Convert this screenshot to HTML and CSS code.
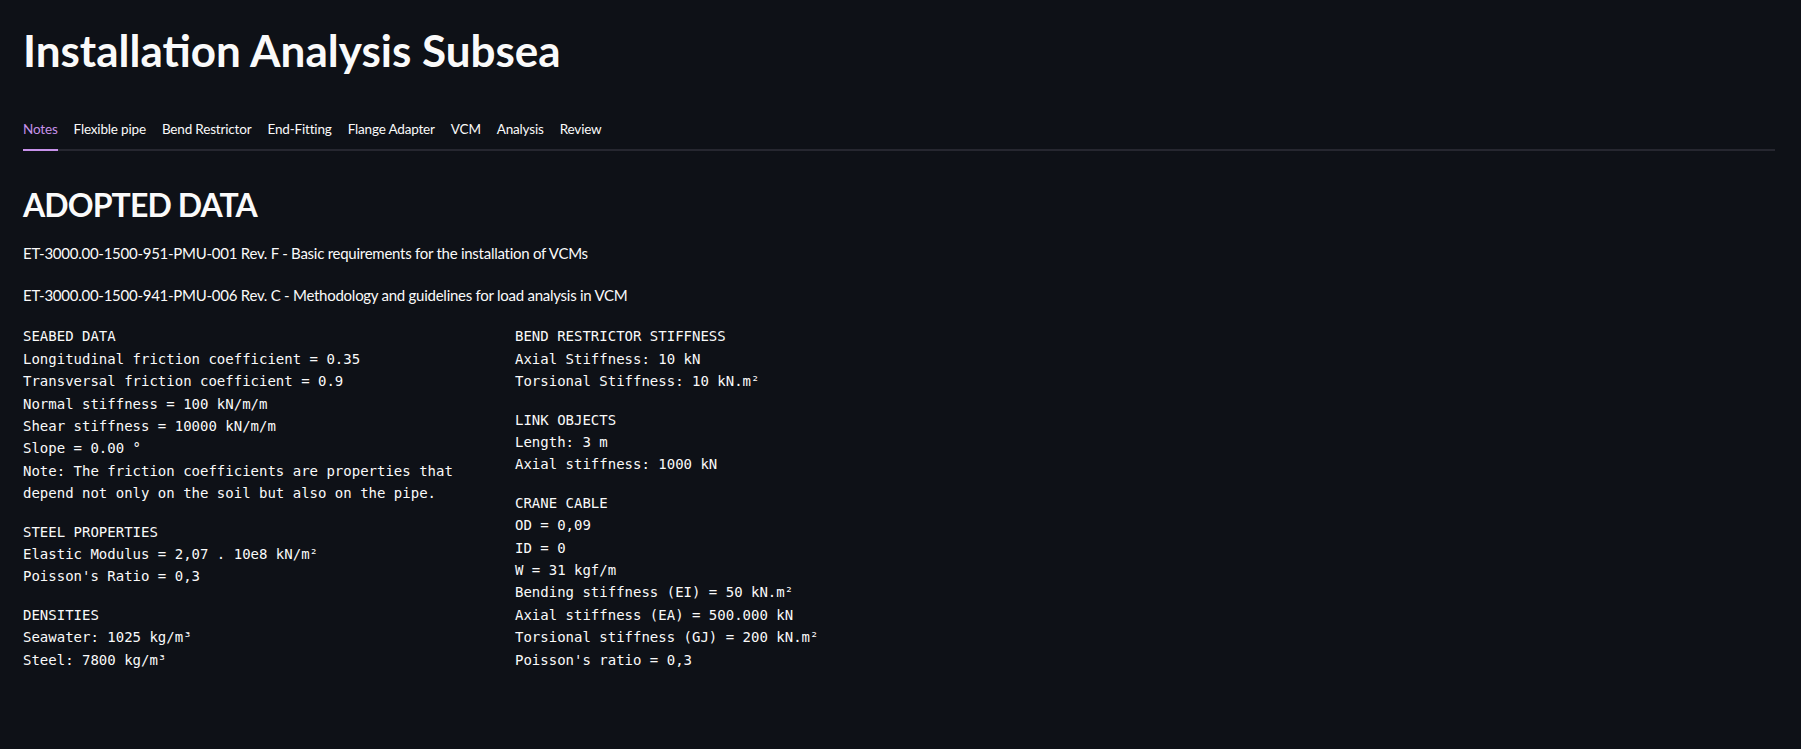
FILE: index.html
```html
<!DOCTYPE html>
<html lang="en">
<head>
<meta charset="utf-8">
<title>Installation Analysis Subsea</title>
<link rel="stylesheet" href="styles.css">
</head>
<body>
<main class="page">
  <h1 class="title">Installation Analysis Subsea</h1>
  <nav class="tabs">
    <div class="tab active">Notes</div>
    <div class="tab">Flexible pipe</div>
    <div class="tab">Bend Restrictor</div>
    <div class="tab">End-Fitting</div>
    <div class="tab">Flange Adapter</div>
    <div class="tab">VCM</div>
    <div class="tab">Analysis</div>
    <div class="tab">Review</div>
  </nav>
  <section class="panel">
    <h2 class="heading">ADOPTED DATA</h2>
    <p class="para">ET-3000.00-1500-951-PMU-001 Rev. F - Basic requirements for the installation of VCMs</p>
    <p class="para">ET-3000.00-1500-941-PMU-006 Rev. C - Methodology and guidelines for load analysis in VCM</p>
    <div class="columns">
      <div class="col">
        <pre class="mono">SEABED DATA
Longitudinal friction coefficient = 0.35
Transversal friction coefficient = 0.9
Normal stiffness = 100 kN/m/m
Shear stiffness = 10000 kN/m/m
Slope = 0.00 °
Note: The friction coefficients are properties that
depend not only on the soil but also on the pipe.</pre>
        <pre class="mono">STEEL PROPERTIES
Elastic Modulus = 2,07 . 10e8 kN/m²
Poisson's Ratio = 0,3</pre>
        <pre class="mono">DENSITIES
Seawater: 1025 kg/m³
Steel: 7800 kg/m³</pre>
      </div>
      <div class="col">
        <pre class="mono">BEND RESTRICTOR STIFFNESS
Axial Stiffness: 10 kN
Torsional Stiffness: 10 kN.m²</pre>
        <pre class="mono">LINK OBJECTS
Length: 3 m
Axial stiffness: 1000 kN</pre>
        <pre class="mono">CRANE CABLE
OD = 0,09
ID = 0
W = 31 kgf/m
Bending stiffness (EI) = 50 kN.m²
Axial stiffness (EA) = 500.000 kN
Torsional stiffness (GJ) = 200 kN.m²
Poisson's ratio = 0,3</pre>
      </div>
    </div>
  </section>
</main>
</body>
</html>
```

FILE: styles.css
```css
html, body {
  margin: 0;
  padding: 0;
  background: #0e1117;
  color: #fafafa;
  font-family: "Lato", "Open Sans", sans-serif;
}

.page {
  padding: 20px 26px 0 23px;
}

.title {
  margin: 0;
  font-size: 44px;
  line-height: 60px;
  font-weight: 700;
  color: #fafafa;
}

.tabs {
  display: flex;
  gap: 16px;
  margin-top: 31px;
  box-shadow: inset 0 -2px 0 #262730;
}

.tab {
  height: 40px;
  box-sizing: border-box;
  padding-bottom: 2px;
  display: flex;
  align-items: center;
  font-size: 13.5px;
  letter-spacing: -0.17px;
  color: #fafafa;
  border-bottom: 2px solid transparent;
}

.tab.active {
  color: #c792ea;
  border-bottom-color: #c792ea;
}

.panel {
  display: flex;
  flex-direction: column;
  gap: 16px;
  margin-top: 31px;
}

.heading {
  margin: 0;
  padding-top: 2px;
  font-size: 32px;
  line-height: 41.2px;
  letter-spacing: -0.9px;
  font-weight: 700;
}

.para {
  margin: 0;
  font-size: 15px;
  letter-spacing: -0.26px;
  line-height: 25.6px;
}

.columns {
  display: grid;
  grid-template-columns: 476px 1fr;
  column-gap: 16px;
  margin-top: 1px;
}

.col {
  display: flex;
  flex-direction: column;
  gap: 16px;
}

.mono {
  margin: 0;
  font-family: "DejaVu Sans Mono", "Liberation Mono", monospace;
  font-size: 14px;
  line-height: 22.4px;
  color: #fafafa;
  white-space: pre;
}
```
